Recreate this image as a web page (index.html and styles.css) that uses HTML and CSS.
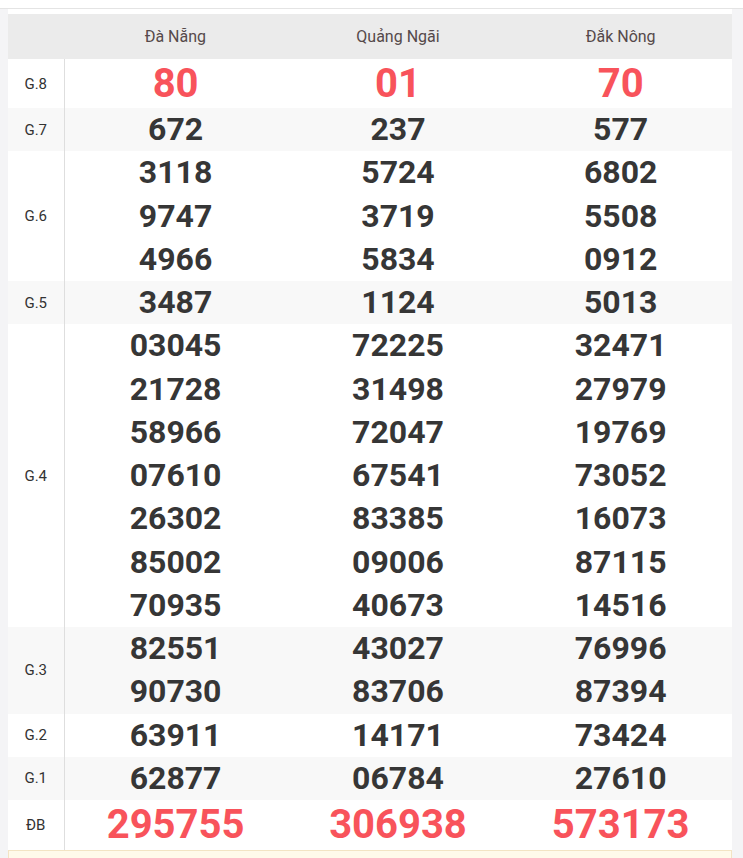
FILE: index.html
```html
<!DOCTYPE html>
<html lang="vi">
<head>
<meta charset="utf-8">
<link rel="stylesheet" href="styles.css">
</head>
<body>
<div class="topbar"></div>
<div class="main">
  <table class="kq">
    <thead>
      <tr class="head">
        <th class="lbl"></th>
        <th>Đà Nẵng</th>
        <th>Quảng Ngãi</th>
        <th>Đắk Nông</th>
      </tr>
    </thead>
    <tbody>
      <tr class="g8">
        <td class="lbl">G.8</td>
        <td><div class="n">80</div></td>
        <td><div class="n">01</div></td>
        <td><div class="n">70</div></td>
      </tr>
      <tr class="alt">
        <td class="lbl">G.7</td>
        <td><div class="n">672</div></td>
        <td><div class="n">237</div></td>
        <td><div class="n">577</div></td>
      </tr>
      <tr>
        <td class="lbl">G.6</td>
        <td><div class="n">3118</div><div class="n">9747</div><div class="n">4966</div></td>
        <td><div class="n">5724</div><div class="n">3719</div><div class="n">5834</div></td>
        <td><div class="n">6802</div><div class="n">5508</div><div class="n">0912</div></td>
      </tr>
      <tr class="alt">
        <td class="lbl">G.5</td>
        <td><div class="n">3487</div></td>
        <td><div class="n">1124</div></td>
        <td><div class="n">5013</div></td>
      </tr>
      <tr>
        <td class="lbl">G.4</td>
        <td><div class="n">03045</div><div class="n">21728</div><div class="n">58966</div><div class="n">07610</div><div class="n">26302</div><div class="n">85002</div><div class="n">70935</div></td>
        <td><div class="n">72225</div><div class="n">31498</div><div class="n">72047</div><div class="n">67541</div><div class="n">83385</div><div class="n">09006</div><div class="n">40673</div></td>
        <td><div class="n">32471</div><div class="n">27979</div><div class="n">19769</div><div class="n">73052</div><div class="n">16073</div><div class="n">87115</div><div class="n">14516</div></td>
      </tr>
      <tr class="alt">
        <td class="lbl">G.3</td>
        <td><div class="n">82551</div><div class="n">90730</div></td>
        <td><div class="n">43027</div><div class="n">83706</div></td>
        <td><div class="n">76996</div><div class="n">87394</div></td>
      </tr>
      <tr>
        <td class="lbl">G.2</td>
        <td><div class="n">63911</div></td>
        <td><div class="n">14171</div></td>
        <td><div class="n">73424</div></td>
      </tr>
      <tr class="alt">
        <td class="lbl">G.1</td>
        <td><div class="n">62877</div></td>
        <td><div class="n">06784</div></td>
        <td><div class="n">27610</div></td>
      </tr>
      <tr class="db">
        <td class="lbl">ĐB</td>
        <td><div class="n">295755</div></td>
        <td><div class="n">306938</div></td>
        <td><div class="n">573173</div></td>
      </tr>
    </tbody>
  </table>
  <div class="note"></div>
</div>
</body>
</html>
```
FILE: styles.css
```css
html, body {
  margin: 0;
  padding: 0;
}
body {
  background: #f4f4f6;
  font-family: Roboto, "Liberation Sans", sans-serif;
  color: #333;
  height: 858px;
  overflow: hidden;
}
.topbar {
  height: 8px;
  background: #fff;
  border-bottom: 1px solid #e4e4e4;
}
.main {
  margin: 0 11px 0 8px;
  background: #fff;
  padding-top: 5px;
}
.kq {
  width: 100%;
  border-collapse: collapse;
  table-layout: fixed;
}
.kq th, .kq td {
  padding: 0;
  text-align: center;
  vertical-align: middle;
}
.kq .lbl {
  width: 56px;
  border-right: 1px solid #dedede;
  font-size: 15px;
  font-weight: 400;
  color: #333;
}
.head th {
  background: #ebebeb;
  height: 45px;
  font-size: 16px;
  font-weight: 400;
  color: #55494a;
}
.head th.lbl {
  border-right: none;
}
.alt td {
  background: #f8f8f8;
}
.n {
  font-size: 32px;
  font-weight: 700;
  line-height: 43.25px;
  color: #363636;
}
.g8 .n {
  font-size: 40px;
  line-height: 49px;
  color: #f8535b;
}
.db .n {
  font-size: 40px;
  line-height: 50px;
  color: #f8535b;
}
.note {
  height: 40px;
  background: #fffaeb;
  border: 1px solid #f3e4c4;
}
```
